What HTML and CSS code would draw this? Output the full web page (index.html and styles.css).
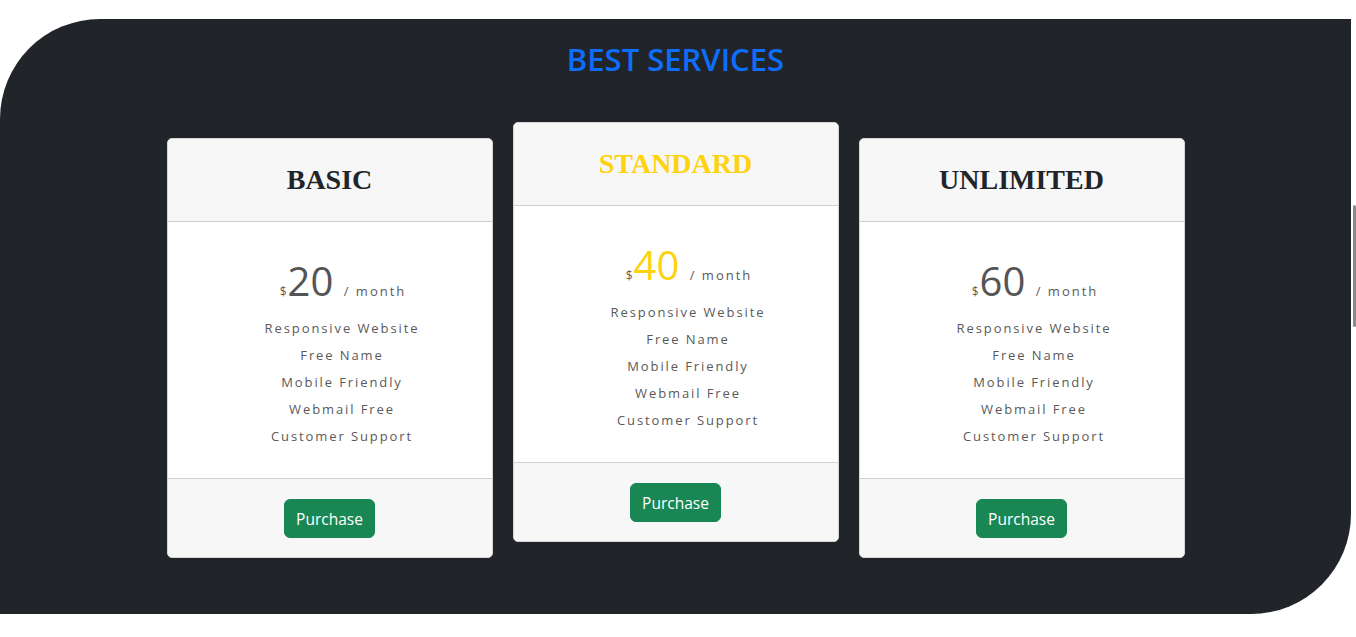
FILE: index.html
```html
<!DOCTYPE html>
<html lang="en">
<head>
<meta charset="utf-8">
<title>Best Services</title>
<link rel="stylesheet" href="styles.css">
</head>
<body>
<section class="services">
  <h2 class="services-title">BEST SERVICES</h2>
  <div class="plans">
    <div class="plan">
      <div class="plan-header"><h3 class="plan-name">BASIC</h3></div>
      <div class="plan-body">
        <div class="price"><span class="cur">$</span><span class="amount">20</span> <span class="per">/ month</span></div>
        <ul class="features">
          <li>Responsive Website</li>
          <li>Free Name</li>
          <li>Mobile Friendly</li>
          <li>Webmail Free</li>
          <li>Customer Support</li>
        </ul>
      </div>
      <div class="plan-footer"><button class="btn-purchase">Purchase</button></div>
    </div>
    <div class="plan plan-featured">
      <div class="plan-header"><h3 class="plan-name">STANDARD</h3></div>
      <div class="plan-body">
        <div class="price"><span class="cur">$</span><span class="amount">40</span> <span class="per">/ month</span></div>
        <ul class="features">
          <li>Responsive Website</li>
          <li>Free Name</li>
          <li>Mobile Friendly</li>
          <li>Webmail Free</li>
          <li>Customer Support</li>
        </ul>
      </div>
      <div class="plan-footer"><button class="btn-purchase">Purchase</button></div>
    </div>
    <div class="plan">
      <div class="plan-header"><h3 class="plan-name">UNLIMITED</h3></div>
      <div class="plan-body">
        <div class="price"><span class="cur">$</span><span class="amount">60</span> <span class="per">/ month</span></div>
        <ul class="features">
          <li>Responsive Website</li>
          <li>Free Name</li>
          <li>Mobile Friendly</li>
          <li>Webmail Free</li>
          <li>Customer Support</li>
        </ul>
      </div>
      <div class="plan-footer"><button class="btn-purchase">Purchase</button></div>
    </div>
  </div>
</section>
<div class="scroll-thumb"></div>
</body>
</html>
```
FILE: styles.css
```css
html, body {
  margin: 0;
  padding: 0;
  background: #ffffff;
  overflow: hidden;
}
body {
  font-family: "Open Sans", "Noto Sans", sans-serif;
  color: #212529;
}
.services {
  box-sizing: border-box;
  margin-top: 19px;
  width: calc(100% - 5px);
  height: 595px;
  background: #212529;
  border-radius: 100px 0 100px 0;
  padding-top: 21px;
}
.services-title {
  margin: 0;
  text-align: center;
  color: #0d6efd;
  font-size: 31px;
  font-weight: 600;
  line-height: 38px;
}
.plans {
  display: flex;
  justify-content: center;
  align-items: flex-start;
  gap: 20px;
  margin-top: 60px;
}
.plan {
  box-sizing: border-box;
  width: 326px;
  background: #ffffff;
  border: 1px solid #d6d6d6;
  border-radius: 5px;
  overflow: hidden;
  display: flex;
  flex-direction: column;
}
.plan-featured {
  transform: translateY(-16px);
}
.plan-header {
  height: 82px;
  background: #f7f7f7;
  border-bottom: 1px solid #cfcfcf;
  display: flex;
  align-items: center;
  justify-content: center;
}
.plan-name {
  margin: 0;
  font-family: "Liberation Serif", "Times New Roman", serif;
  font-weight: 700;
  font-size: 28px;
  color: #212529;
  line-height: 1;
}
.plan-featured .plan-name {
  color: #fdd20f;
}
.plan-body {
  height: 256px;
  box-sizing: border-box;
  padding: 35px 0 0 27px;
  text-align: center;
  color: #5a5a5a;
}
.price {
  font-size: 40px;
  line-height: 48px;
  height: 48px;
}
.cur {
  font-size: 12px;
  line-height: 1;
  margin-right: 1px;
}
.amount {
  font-size: 40px;
  color: #555555;
}
.plan-featured .amount {
  color: #fdd20f;
}
.per {
  font-size: 13px;
  line-height: 1;
  letter-spacing: 2px;
}
.features {
  list-style: none;
  margin: 10px 0 0 -2px;
  padding: 0;
  font-size: 13px;
  line-height: 27px;
  letter-spacing: 1.9px;
}
.plan-footer {
  height: 79px;
  box-sizing: border-box;
  background: #f7f7f7;
  border-top: 1px solid #cfcfcf;
  display: flex;
  justify-content: center;
  align-items: center;
}
.btn-purchase {
  font-family: "Open Sans", "Noto Sans", sans-serif;
  font-size: 15.5px;
  color: #ffffff;
  background: #198754;
  border: 1px solid #198754;
  border-radius: 6px;
  height: 39px;
  width: 91px;
  padding: 0;
  line-height: 38px;
  cursor: pointer;
}
.scroll-thumb {
  position: fixed;
  top: 205px;
  right: 0;
  width: 3px;
  height: 122px;
  background: #8a8a8a;
  border-radius: 2px;
}
```
